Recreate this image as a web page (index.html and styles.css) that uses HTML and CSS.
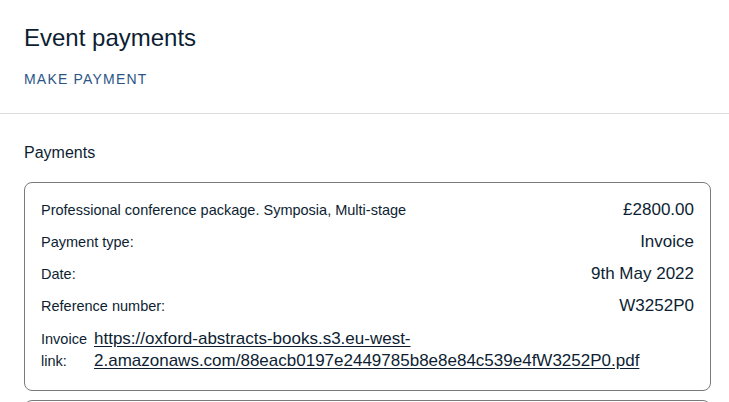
FILE: index.html
```html
<!DOCTYPE html>
<html>
<head>
<meta charset="utf-8">
<link rel="stylesheet" href="styles.css">
</head>
<body>
<header class="header">
  <h1 class="title">Event payments</h1>
  <a class="make-payment" href="#">MAKE PAYMENT</a>
</header>
<main class="content">
  <h2 class="section-title">Payments</h2>
  <div class="card">
    <div class="row">
      <span class="label">Professional conference package. Symposia, Multi-stage</span>
      <span class="value">£2800.00</span>
    </div>
    <div class="row">
      <span class="label">Payment type:</span>
      <span class="value">Invoice</span>
    </div>
    <div class="row">
      <span class="label">Date:</span>
      <span class="value">9th May 2022</span>
    </div>
    <div class="row">
      <span class="label">Reference number:</span>
      <span class="value">W3252P0</span>
    </div>
    <div class="row link-row">
      <span class="label link-label">Invoice link:</span>
      <a class="invoice-link" href="#">https://oxford-abstracts-books.s3.eu-west-2.amazonaws.com/88eacb0197e2449785b8e8e84c539e4fW3252P0.pdf</a>
    </div>
  </div>
  <div class="card card-next"></div>
</main>
</body>
</html>
```
FILE: styles.css
```css
html, body {
  margin: 0;
  padding: 0;
  background: #ffffff;
  font-family: "Liberation Sans", Arial, sans-serif;
  color: #0d1e33;
  overflow: hidden;
}
.header {
  padding: 24px 24px 25px;
  border-bottom: 1px solid #dcdcdc;
  display: flex;
  flex-direction: column;
  align-items: flex-start;
}
.title {
  margin: 0;
  font-size: 24px;
  font-weight: 400;
  line-height: 28px;
}
.make-payment {
  margin-top: 18px;
  font-size: 14px;
  letter-spacing: 1.2px;
  color: #2c5587;
  text-decoration: none;
  line-height: 18px;
}
.content {
  padding: 28px 18px 0 24px;
}
.section-title {
  margin: 0 0 18px;
  font-size: 16px;
  font-weight: 400;
  line-height: 22px;
}
.card {
  border: 1px solid #7a7a7a;
  border-radius: 8px;
  padding: 16px 16px 18px;
  display: flex;
  flex-direction: column;
  gap: 10px;
}
.row {
  display: flex;
  justify-content: space-between;
  align-items: center;
  min-height: 22px;
}
.label {
  font-size: 14.5px;
  line-height: 22px;
}
.value {
  font-size: 17px;
  line-height: 22px;
}
.link-row {
  justify-content: flex-start;
  align-items: flex-start;
  gap: 4px;
  margin-top: 1px;
}
.link-label {
  width: 49px;
  flex: none;
}
.invoice-link {
  font-size: 17px;
  line-height: 22px;
  color: #0d1e33;
  text-decoration: underline;
  text-underline-offset: 2px;
}
.card-next {
  margin-top: 9px;
  height: 40px;
  border-radius: 8px 8px 0 0;
}
```
